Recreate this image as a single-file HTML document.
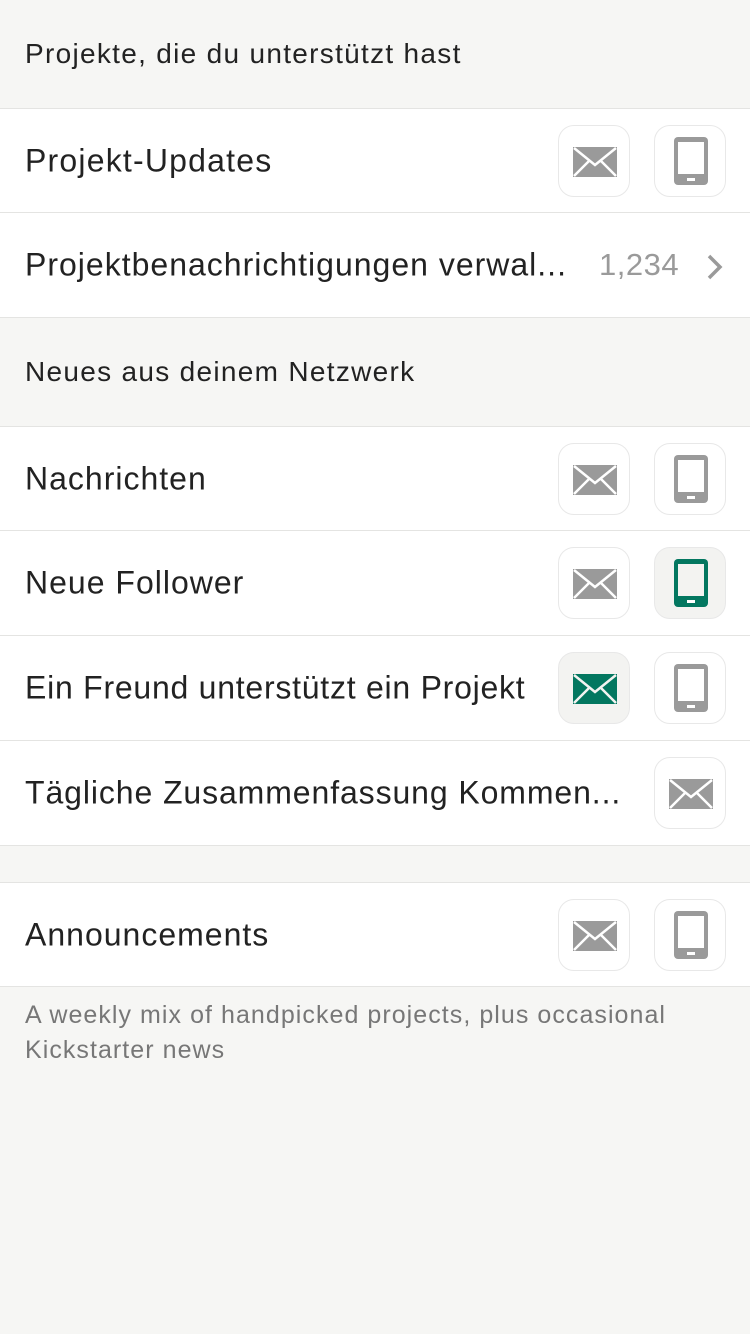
<!DOCTYPE html><html><head><meta charset="utf-8"><style>
body{margin:0;width:750px;height:1334px;background:#f6f6f4;font-family:"Liberation Sans",sans-serif;position:relative;overflow:hidden;color:#222}
.h{position:absolute;left:25px;font-size:28px;color:#222;letter-spacing:1.3px}
.row{position:absolute;left:0;width:750px;background:#fff;border-bottom:1px solid #e4e4e2}
.row .t{position:absolute;left:25px;top:50%;transform:translateY(-50%);font-size:32px;white-space:nowrap;letter-spacing:1px}
.b{position:absolute;top:16px;width:70px;height:70px;border:1px solid #e8e8e8;border-radius:16px;background:#fff}
.b.on{background:#f3f3f1}
.b svg{position:absolute}
</style></head><body>
<div class="h" style="top:38px">Projekte, die du unterstützt hast</div>
<div style="position:absolute;top:108px;left:0;width:750px;border-top:1px solid #e4e4e2"></div>
<div class="row" style="top:109px;height:103px"><div class="t" style="letter-spacing:1.2px">Projekt-Updates</div>
<div class="b" style="left:558px"><svg style="left:14px;top:21px" width="44" height="30" viewBox="0 0 44 30"><rect width="44" height="30" fill="#9a9a9a"/><path d="M1 1L22 18L43 1M1 29L16 14M43 29L28 14" stroke="#fff" stroke-width="2.5" fill="none"/></svg></div>
<div class="b" style="left:654px"><svg style="left:19px;top:11px" width="34" height="48" viewBox="0 0 34 48"><rect width="34" height="48" rx="4" fill="#9a9a9a"/><rect x="4" y="5" width="26" height="32" fill="#fff"/><rect x="13" y="41" width="8" height="3" fill="#fff"/></svg></div></div>
<div class="row" style="top:213px;height:104px"><div class="t">Projektbenachrichtigungen verwal...</div>
<div style="position:absolute;left:599px;top:34px;font-size:31px;color:#9a9a9a;letter-spacing:0.5px">1,234</div>
<svg style="position:absolute;left:706px;top:40px" width="18" height="28" viewBox="0 0 18 28"><path d="M3 3L14 14L3 25" stroke="#9a9a9a" stroke-width="3.5" fill="none"/></svg></div>
<div class="h" style="top:356px">Neues aus deinem Netzwerk</div>
<div style="position:absolute;top:426px;left:0;width:750px;border-top:1px solid #e4e4e2"></div>
<div class="row" style="top:427px;height:103px"><div class="t">Nachrichten</div>
<div class="b" style="left:558px"><svg style="left:14px;top:21px" width="44" height="30" viewBox="0 0 44 30"><rect width="44" height="30" fill="#9a9a9a"/><path d="M1 1L22 18L43 1M1 29L16 14M43 29L28 14" stroke="#fff" stroke-width="2.5" fill="none"/></svg></div>
<div class="b" style="left:654px"><svg style="left:19px;top:11px" width="34" height="48" viewBox="0 0 34 48"><rect width="34" height="48" rx="4" fill="#9a9a9a"/><rect x="4" y="5" width="26" height="32" fill="#fff"/><rect x="13" y="41" width="8" height="3" fill="#fff"/></svg></div></div>
<div class="row" style="top:531px;height:104px"><div class="t">Neue Follower</div>
<div class="b" style="left:558px"><svg style="left:14px;top:21px" width="44" height="30" viewBox="0 0 44 30"><rect width="44" height="30" fill="#9a9a9a"/><path d="M1 1L22 18L43 1M1 29L16 14M43 29L28 14" stroke="#fff" stroke-width="2.5" fill="none"/></svg></div>
<div class="b on" style="left:654px"><svg style="left:19px;top:11px" width="34" height="48" viewBox="0 0 34 48"><rect width="34" height="48" rx="4" fill="#037760"/><rect x="4" y="5" width="26" height="32" fill="#f3f3f1"/><rect x="13" y="41" width="8" height="3" fill="#fff"/></svg></div></div>
<div class="row" style="top:636px;height:104px"><div class="t" style="letter-spacing:0.75px">Ein Freund unterstützt ein Projekt</div>
<div class="b on" style="left:558px"><svg style="left:14px;top:21px" width="44" height="30" viewBox="0 0 44 30"><rect width="44" height="30" fill="#037760"/><path d="M1 1L22 18L43 1M1 29L16 14M43 29L28 14" stroke="#f3f3f1" stroke-width="2.5" fill="none"/></svg></div>
<div class="b" style="left:654px"><svg style="left:19px;top:11px" width="34" height="48" viewBox="0 0 34 48"><rect width="34" height="48" rx="4" fill="#9a9a9a"/><rect x="4" y="5" width="26" height="32" fill="#fff"/><rect x="13" y="41" width="8" height="3" fill="#fff"/></svg></div></div>
<div class="row" style="top:741px;height:104px"><div class="t" style="letter-spacing:0.9px">Tägliche Zusammenfassung Kommen...</div>
<div class="b" style="left:654px"><svg style="left:14px;top:21px" width="44" height="30" viewBox="0 0 44 30"><rect width="44" height="30" fill="#9a9a9a"/><path d="M1 1L22 18L43 1M1 29L16 14M43 29L28 14" stroke="#fff" stroke-width="2.5" fill="none"/></svg></div></div>
<div style="position:absolute;top:882px;left:0;width:750px;border-top:1px solid #e4e4e2"></div>
<div class="row" style="top:883px;height:103px"><div class="t">Announcements</div>
<div class="b" style="left:558px"><svg style="left:14px;top:21px" width="44" height="30" viewBox="0 0 44 30"><rect width="44" height="30" fill="#9a9a9a"/><path d="M1 1L22 18L43 1M1 29L16 14M43 29L28 14" stroke="#fff" stroke-width="2.5" fill="none"/></svg></div>
<div class="b" style="left:654px"><svg style="left:19px;top:11px" width="34" height="48" viewBox="0 0 34 48"><rect width="34" height="48" rx="4" fill="#9a9a9a"/><rect x="4" y="5" width="26" height="32" fill="#fff"/><rect x="13" y="41" width="8" height="3" fill="#fff"/></svg></div></div>
<div style="position:absolute;left:25px;top:998px;font-size:25px;line-height:35px;color:#777;width:720px;letter-spacing:1.05px">A weekly mix of handpicked projects, plus occasional<br>Kickstarter news</div>
</body></html>
